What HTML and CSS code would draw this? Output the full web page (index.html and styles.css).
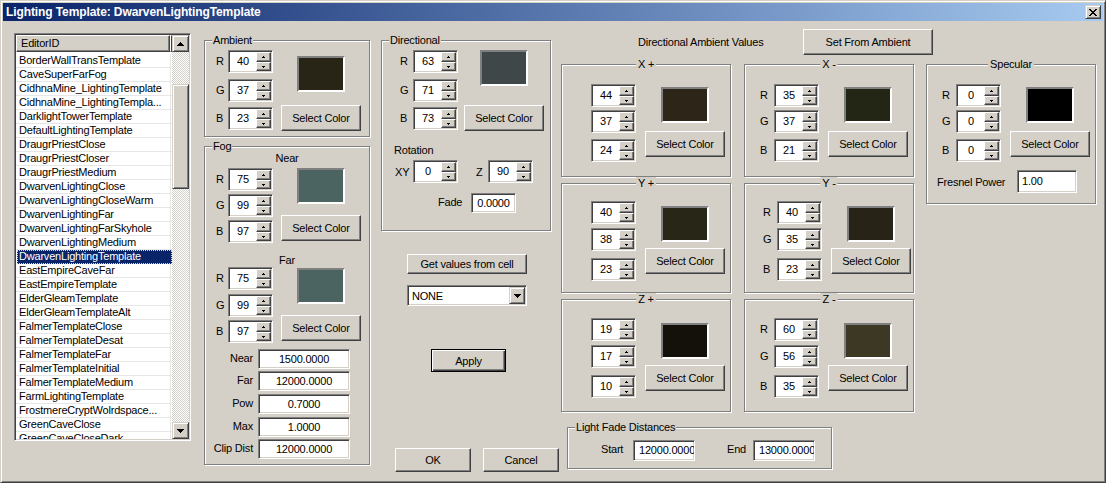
FILE: index.html
```html
<!DOCTYPE html>
<html>
<head>
<meta charset="utf-8">
<title>Lighting Template</title>
<link rel="stylesheet" href="styles.css">
</head>
<body>
<div class="window">
  <div class="titlebar">
    <span class="title">Lighting Template: DwarvenLightingTemplate</span>
    <span class="close raised3d"><svg width="8" height="7" viewBox="0 0 8 7" shape-rendering="crispEdges"><path d="M0 0h2v1H0zM6 0h2v1H6zM1 1h2v1H1zM5 1h2v1H5zM2 2h4v1H2zM3 3h2v1H3zM2 4h4v1H2zM1 5h2v1H1zM5 5h2v1H5zM0 6h2v1H0zM6 6h2v1H6z"/></svg></span>
  </div>
  <div class="client">
    <!-- list -->
    <div class="list sunken">
      <div class="lv">
        <div class="lvhead"><span class="hcell btn">EditorID</span><span class="hfill btn"></span></div>
        <div class="rows">
          <div class="it">BorderWallTransTemplate</div>
          <div class="it">CaveSuperFarFog</div>
          <div class="it">CidhnaMine_LightingTemplate</div>
          <div class="it">CidhnaMine_LightingTempla...</div>
          <div class="it">DarklightTowerTemplate</div>
          <div class="it">DefaultLightingTemplate</div>
          <div class="it">DraugrPriestClose</div>
          <div class="it">DraugrPriestCloser</div>
          <div class="it">DraugrPriestMedium</div>
          <div class="it">DwarvenLightingClose</div>
          <div class="it">DwarvenLightingCloseWarm</div>
          <div class="it">DwarvenLightingFar</div>
          <div class="it">DwarvenLightingFarSkyhole</div>
          <div class="it">DwarvenLightingMedium</div>
          <div class="it sel">DwarvenLightingTemplate</div>
          <div class="it">EastEmpireCaveFar</div>
          <div class="it">EastEmpireTemplate</div>
          <div class="it">ElderGleamTemplate</div>
          <div class="it">ElderGleamTemplateAlt</div>
          <div class="it">FalmerTemplateClose</div>
          <div class="it">FalmerTemplateDesat</div>
          <div class="it">FalmerTemplateFar</div>
          <div class="it">FalmerTemplateInitial</div>
          <div class="it">FalmerTemplateMedium</div>
          <div class="it">FarmLightingTemplate</div>
          <div class="it">FrostmereCryptWolrdspace...</div>
          <div class="it">GreenCaveClose</div>
          <div class="it">GreenCaveCloseDark</div>
        </div>
      </div>
      <div class="vscroll">
        <div class="sbtn raised3d"><svg width="7" height="4" viewBox="0 0 7 4" shape-rendering="crispEdges"><path d="M3 0h1v1H3zM2 1h3v1H2zM1 2h5v1H1zM0 3h7v1H0z"/></svg></div>
        <div class="track"><div class="thumb raised3d"></div></div>
        <div class="sbtn raised3d"><svg width="7" height="4" viewBox="0 0 7 4" shape-rendering="crispEdges"><path d="M0 0h7v1H0zM1 1h5v1H1zM2 2h3v1H2zM3 3h1v1H3z"/></svg></div>
      </div>
    </div>

    <!-- ambient / fog -->
    <div class="col2">
      <div class="group g-amb">
        <span class="legend">Ambient</span>
        <div class="cblock cb-amb">
          <div class="rgb">
            <div class="row"><span class="lbl">R</span><div class="spin sunken"><span class="val">40</span><span class="ud"><i class="up"></i><i class="dn"></i></span></div></div>
            <div class="row"><span class="lbl">G</span><div class="spin sunken"><span class="val">37</span><span class="ud"><i class="up"></i><i class="dn"></i></span></div></div>
            <div class="row"><span class="lbl">B</span><div class="spin sunken"><span class="val">23</span><span class="ud"><i class="up"></i><i class="dn"></i></span></div></div>
          </div>
          <div class="pick"><div class="swatch" style="background:#282517"></div><button class="btn">Select Color</button></div>
        </div>
      </div>
      <div class="group g-fog">
        <span class="legend">Fog</span>
        <div class="fhead">Near</div>
        <div class="cblock cb-near">
          <div class="rgb">
            <div class="row"><span class="lbl">R</span><div class="spin sunken"><span class="val">75</span><span class="ud"><i class="up"></i><i class="dn"></i></span></div></div>
            <div class="row"><span class="lbl">G</span><div class="spin sunken"><span class="val">99</span><span class="ud"><i class="up"></i><i class="dn"></i></span></div></div>
            <div class="row"><span class="lbl">B</span><div class="spin sunken"><span class="val">97</span><span class="ud"><i class="up"></i><i class="dn"></i></span></div></div>
          </div>
          <div class="pick"><div class="swatch" style="background:#4b6361"></div><button class="btn">Select Color</button></div>
        </div>
        <div class="fhead far">Far</div>
        <div class="cblock cb-far">
          <div class="rgb">
            <div class="row"><span class="lbl">R</span><div class="spin sunken"><span class="val">75</span><span class="ud"><i class="up"></i><i class="dn"></i></span></div></div>
            <div class="row"><span class="lbl">G</span><div class="spin sunken"><span class="val">99</span><span class="ud"><i class="up"></i><i class="dn"></i></span></div></div>
            <div class="row"><span class="lbl">B</span><div class="spin sunken"><span class="val">97</span><span class="ud"><i class="up"></i><i class="dn"></i></span></div></div>
          </div>
          <div class="pick"><div class="swatch" style="background:#4b6361"></div><button class="btn">Select Color</button></div>
        </div>
        <div class="dist">
          <div class="drow"><span class="dlbl">Near</span><div class="dedit sunken">1500.0000</div></div>
          <div class="drow"><span class="dlbl">Far</span><div class="dedit sunken">12000.0000</div></div>
          <div class="drow"><span class="dlbl">Pow</span><div class="dedit sunken">0.7000</div></div>
          <div class="drow"><span class="dlbl">Max</span><div class="dedit sunken">1.0000</div></div>
          <div class="drow"><span class="dlbl">Clip Dist</span><div class="dedit sunken">12000.0000</div></div>
        </div>
      </div>
    </div>

    <!-- directional -->
    <div class="col3">
      <div class="group g-dir">
        <span class="legend">Directional</span>
        <div class="cblock cb-dir">
          <div class="rgb">
            <div class="row"><span class="lbl">R</span><div class="spin sunken"><span class="val">63</span><span class="ud"><i class="up"></i><i class="dn"></i></span></div></div>
            <div class="row"><span class="lbl">G</span><div class="spin sunken"><span class="val">71</span><span class="ud"><i class="up"></i><i class="dn"></i></span></div></div>
            <div class="row"><span class="lbl">B</span><div class="spin sunken"><span class="val">73</span><span class="ud"><i class="up"></i><i class="dn"></i></span></div></div>
          </div>
          <div class="pick"><div class="swatch" style="background:#3f4749"></div><button class="btn">Select Color</button></div>
        </div>
        <div class="rottitle">Rotation</div>
        <div class="rotrow">
          <span class="xylbl">XY</span>
          <div class="spin sunken"><span class="val">0</span><span class="ud"><i class="up"></i><i class="dn"></i></span></div>
          <span class="zlbl">Z</span>
          <div class="spin sunken"><span class="val">90</span><span class="ud"><i class="up"></i><i class="dn"></i></span></div>
        </div>
        <div class="faderow"><span class="fadelbl">Fade</span><div class="fadeedit sunken">0.0000</div></div>
      </div>
      <button class="btn getvals">Get values from cell</button>
      <div class="combo sunken"><span class="ctext">NONE</span><span class="ddbtn raised3d"><svg width="7" height="4" viewBox="0 0 7 4" shape-rendering="crispEdges"><path d="M0 0h7v1H0zM1 1h5v1H1zM2 2h3v1H2zM3 3h1v1H3z"/></svg></span></div>
      <button class="btn default apply">Apply</button>
      <div class="okrow"><button class="btn">OK</button><button class="btn">Cancel</button></div>
    </div>

    <!-- directional ambient -->
    <div class="col4">
      <div class="davhead"><span class="davtitle">Directional Ambient Values</span><button class="btn setamb">Set From Ambient</button></div>
      <div class="davbody">
        <div class="davgrid">
          <div class="group">
            <span class="legend mid">X +</span>
            <div class="cblock cb-x">
              <div class="rgb">
                <div class="row"><span class="lbl"></span><div class="spin sunken"><span class="val">44</span><span class="ud"><i class="up"></i><i class="dn"></i></span></div></div>
                <div class="row"><span class="lbl"></span><div class="spin sunken"><span class="val">37</span><span class="ud"><i class="up"></i><i class="dn"></i></span></div></div>
                <div class="row"><span class="lbl"></span><div class="spin sunken"><span class="val">24</span><span class="ud"><i class="up"></i><i class="dn"></i></span></div></div>
              </div>
              <div class="pick"><div class="swatch" style="background:#2c2518"></div><button class="btn">Select Color</button></div>
            </div>
          </div>
          <div class="group">
            <span class="legend mid">X -</span>
            <div class="cblock cb-x">
              <div class="rgb">
                <div class="row"><span class="lbl">R</span><div class="spin sunken"><span class="val">35</span><span class="ud"><i class="up"></i><i class="dn"></i></span></div></div>
                <div class="row"><span class="lbl">G</span><div class="spin sunken"><span class="val">37</span><span class="ud"><i class="up"></i><i class="dn"></i></span></div></div>
                <div class="row"><span class="lbl">B</span><div class="spin sunken"><span class="val">21</span><span class="ud"><i class="up"></i><i class="dn"></i></span></div></div>
              </div>
              <div class="pick"><div class="swatch" style="background:#232515"></div><button class="btn">Select Color</button></div>
            </div>
          </div>
          <div class="group">
            <span class="legend mid">Y +</span>
            <div class="cblock cb-y">
              <div class="rgb">
                <div class="row"><span class="lbl"></span><div class="spin sunken"><span class="val">40</span><span class="ud"><i class="up"></i><i class="dn"></i></span></div></div>
                <div class="row"><span class="lbl"></span><div class="spin sunken"><span class="val">38</span><span class="ud"><i class="up"></i><i class="dn"></i></span></div></div>
                <div class="row"><span class="lbl"></span><div class="spin sunken"><span class="val">23</span><span class="ud"><i class="up"></i><i class="dn"></i></span></div></div>
              </div>
              <div class="pick"><div class="swatch" style="background:#282617"></div><button class="btn">Select Color</button></div>
            </div>
          </div>
          <div class="group">
            <span class="legend mid">Y -</span>
            <div class="cblock cb-y shift">
              <div class="rgb">
                <div class="row"><span class="lbl">R</span><div class="spin sunken"><span class="val">40</span><span class="ud"><i class="up"></i><i class="dn"></i></span></div></div>
                <div class="row"><span class="lbl">G</span><div class="spin sunken"><span class="val">35</span><span class="ud"><i class="up"></i><i class="dn"></i></span></div></div>
                <div class="row"><span class="lbl">B</span><div class="spin sunken"><span class="val">23</span><span class="ud"><i class="up"></i><i class="dn"></i></span></div></div>
              </div>
              <div class="pick"><div class="swatch" style="background:#282317"></div><button class="btn">Select Color</button></div>
            </div>
          </div>
          <div class="group">
            <span class="legend mid">Z +</span>
            <div class="cblock cb-z">
              <div class="rgb">
                <div class="row"><span class="lbl"></span><div class="spin sunken"><span class="val">19</span><span class="ud"><i class="up"></i><i class="dn"></i></span></div></div>
                <div class="row"><span class="lbl"></span><div class="spin sunken"><span class="val">17</span><span class="ud"><i class="up"></i><i class="dn"></i></span></div></div>
                <div class="row"><span class="lbl"></span><div class="spin sunken"><span class="val">10</span><span class="ud"><i class="up"></i><i class="dn"></i></span></div></div>
              </div>
              <div class="pick"><div class="swatch" style="background:#13110a"></div><button class="btn">Select Color</button></div>
            </div>
          </div>
          <div class="group">
            <span class="legend mid">Z -</span>
            <div class="cblock cb-z">
              <div class="rgb">
                <div class="row"><span class="lbl">R</span><div class="spin sunken"><span class="val">60</span><span class="ud"><i class="up"></i><i class="dn"></i></span></div></div>
                <div class="row"><span class="lbl">G</span><div class="spin sunken"><span class="val">56</span><span class="ud"><i class="up"></i><i class="dn"></i></span></div></div>
                <div class="row"><span class="lbl">B</span><div class="spin sunken"><span class="val">35</span><span class="ud"><i class="up"></i><i class="dn"></i></span></div></div>
              </div>
              <div class="pick"><div class="swatch" style="background:#3c3823"></div><button class="btn">Select Color</button></div>
            </div>
          </div>
        </div>
        <div class="group g-spec">
          <span class="legend mid">Specular</span>
          <div class="cblock cb-x">
            <div class="rgb">
              <div class="row"><span class="lbl">R</span><div class="spin sunken"><span class="val">0</span><span class="ud"><i class="up"></i><i class="dn"></i></span></div></div>
              <div class="row"><span class="lbl">G</span><div class="spin sunken"><span class="val">0</span><span class="ud"><i class="up"></i><i class="dn"></i></span></div></div>
              <div class="row"><span class="lbl">B</span><div class="spin sunken"><span class="val">0</span><span class="ud"><i class="up"></i><i class="dn"></i></span></div></div>
            </div>
            <div class="pick"><div class="swatch" style="background:#000000"></div><button class="btn">Select Color</button></div>
          </div>
          <div class="fresnel"><span class="frlbl">Fresnel Power</span><div class="fredit sunken">1.00</div></div>
        </div>
      </div>
      <div class="group g-fade">
        <span class="legend">Light Fade Distances</span>
        <div class="fadedist">
          <span class="fdlbl">Start</span><div class="fdedit sunken">12000.0000</div>
          <span class="fdlbl end">End</span><div class="fdedit sunken">13000.0000</div>
        </div>
      </div>
    </div>
  </div>
</div>
</body>
</html>
```

FILE: styles.css
```css
* { box-sizing: border-box; }
html, body { margin: 0; padding: 0; }
body {
  width: 1106px;
  height: 483px;
  overflow: hidden;
  background: #d4d0c8;
  font-family: "Liberation Sans", Arial, sans-serif;
  font-size: 11px;
  letter-spacing: -0.2px;
  color: #000;
}
button {
  font: inherit;
  letter-spacing: inherit;
  color: #000;
  margin: 0;
  padding: 0;
  background: #d4d0c8;
  cursor: default;
}

/* window frame */
.window {
  width: 1106px;
  height: 483px;
  padding: 2px;
  border: 1px solid;
  border-color: #d4d0c8 #404040 #404040 #d4d0c8;
  box-shadow: inset 1px 1px #fff, inset -1px -1px #808080;
  display: flex;
  flex-direction: column;
}
.titlebar {
  height: 18px;
  flex: none;
  margin-bottom: 1px;
  display: flex;
  align-items: center;
  justify-content: space-between;
  padding: 0 2px 0 3px;
  background: linear-gradient(90deg, #0a246a, #a6caf0);
}
.title {
  color: #fff;
  font-weight: bold;
  font-size: 12px;
  letter-spacing: -0.1px;
  white-space: nowrap;
}
.close {
  width: 16px;
  height: 14px;
  display: flex;
  align-items: center;
  justify-content: center;
}

/* bevels */
.raised3d {
  background: #d4d0c8;
  border: 1px solid;
  border-color: #d4d0c8 #404040 #404040 #d4d0c8;
  box-shadow: inset 1px 1px #fff, inset -1px -1px #808080;
}
.btn {
  background: #d4d0c8;
  border: 1px solid;
  border-color: #fff #404040 #404040 #fff;
  box-shadow: inset -1px -1px #808080;
}
.btn.default {
  border-color: #000;
  box-shadow: inset 1px 1px #fff, inset -1px -1px #404040, inset -2px -2px #808080;
}
.sunken {
  background: #fff;
  border: 1px solid;
  border-color: #808080 #fff #fff #808080;
  box-shadow: inset 1px 1px #404040, inset -1px -1px #d4d0c8;
  padding: 1px;
}

.client {
  flex: 1;
  display: flex;
  align-items: flex-start;
}

/* list view */
.list {
  width: 177px;
  height: 408px;
  margin: 11px 0 0 11px;
  display: flex;
  flex: none;
}
.lv {
  width: 156px;
  height: 100%;
  overflow: hidden;
  display: flex;
  flex-direction: column;
}
.lvhead { height: 17px; display: flex; flex: none; }
.hcell { width: 154px; padding-left: 4px; line-height: 15px; }
.hfill { flex: 1; }
.rows { padding-top: 2px; }
.it {
  height: 14px;
  line-height: 13px;
  padding-left: 3px;
  white-space: nowrap;
  overflow: hidden;
  border-bottom: 1px solid #e6e6e6;
  background: #fff linear-gradient(90deg, transparent 154px, #e6e6e6 154px 155px, transparent 155px);
}
.it.sel {
  width: 155px;
  margin-left: 1px;
  padding-left: 2px;
  background: #0a246a;
  color: #fff;
  border-bottom-color: #0a246a;
  outline: 1px dotted #e6d98f;
  outline-offset: -1px;
}
.vscroll { width: 17px; display: flex; flex-direction: column; }
.sbtn {
  height: 17px;
  flex: none;
  display: flex;
  align-items: center;
  justify-content: center;
}
.track {
  flex: 1;
  background: repeating-conic-gradient(#fff 0 25%, #d4d0c8 0 50%) 0 0 / 2px 2px;
}
.thumb { margin-top: 32px; height: 105px; }

/* group boxes */
.group {
  position: relative;
  flex: none;
  border: 1px solid #808080;
  box-shadow: inset 1px 1px #fff, 1px 1px #fff;
}
.legend {
  position: absolute;
  top: -7px;
  left: 7px;
  padding: 0 1px;
  line-height: 13px;
  background: #d4d0c8;
  white-space: nowrap;
}
.legend.mid {
  left: 50%;
  transform: translateX(-50%);
  padding: 0 2px;
}

/* color block: rgb spinners + swatch/button */
.cblock {
  display: flex;
  align-items: flex-start;
  padding-left: var(--pl);
}
.rgb { display: flex; flex-direction: column; margin-top: var(--rt); }
.row { display: flex; align-items: center; }
.row + .row { margin-top: var(--g1); }
.row + .row + .row { margin-top: var(--g2); }
.lbl { width: var(--lw); line-height: 13px; flex: none; }
.pick {
  display: flex;
  flex-direction: column;
  align-items: center;
  width: 80px;
  flex: none;
  margin-left: var(--pg);
}
.pick .swatch { margin-top: var(--st); }
.pick .btn { margin-top: var(--bt); width: 80px; height: 26px; }
.swatch {
  width: 48px;
  height: 36px;
  border: 2px solid;
  border-color: #808080 #fff #fff #808080;
}

.cb-amb  { --pl: 11px; --lw: 12px; --pg: 8px; --rt: 9px; --g1: 6px; --g2: 5px; --st: 15px; --bt: 13px; }
.cb-near { --pl: 11px; --lw: 12px; --pg: 8px; --rt: 3px; --g1: 3px; --g2: 3px; --st: 3px; --bt: 11px; }
.cb-far  { --pl: 11px; --lw: 12px; --pg: 8px; --rt: 0px; --g1: 4px; --g2: 3px; --st: 1px; --bt: 11px; }
.cb-dir  { --pl: 18px; --lw: 13px; --pg: 6px; --rt: 9px; --g1: 6px; --g2: 5px; --st: 9px; --bt: 19px; }
.cb-x    { --pl: 15px; --lw: 14px; --pg: 9px; --rt: 19px; --g1: 3px; --g2: 6px; --st: 22px; --bt: 8px; }
.cb-y    { --pl: 15px; --lw: 14px; --pg: 9px; --rt: 17px; --g1: 4px; --g2: 7px; --st: 22px; --bt: 6px; }
.cb-y.shift { --pl: 18px; }
.cb-z    { --pl: 15px; --lw: 14px; --pg: 9px; --rt: 18px; --g1: 4px; --g2: 7px; --st: 23px; --bt: 6px; }

/* spinner */
.spin { width: 45px; height: 23px; display: flex; flex: none; }
.val { flex: 1; text-align: center; line-height: 19px; }
.ud { width: 15px; display: flex; flex-direction: column; }
.ud i {
  display: flex;
  align-items: center;
  justify-content: center;
  background: #d4d0c8;
  border: 1px solid;
  border-color: #fff #404040 #404040 #fff;
  box-shadow: inset -1px -1px #808080;
}
.ud .up { height: 10px; }
.ud .dn { height: 9px; }
.up::before, .dn::before {
  content: "";
  width: 1px;
  height: 1px;
  margin-top: -1px;
  background: #000;
}
.up::before { box-shadow: -1px 1px #000, 0 1px #000, 1px 1px #000; }
.dn::before { box-shadow: -1px 0 #000, 1px 0 #000, 0 1px #000; }

/* column 2 */
.col2 { margin: 18px 0 0 13px; display: flex; flex-direction: column; flex: none; }
.g-amb { width: 166px; height: 97px; }
.g-fog { width: 166px; height: 319px; margin-top: 9px; }
.fhead { margin: 5px 0 0 62px; width: 40px; text-align: center; line-height: 13px; }
.fhead.far { margin-top: 11px; }
.dist { margin-top: 6px; display: flex; flex-direction: column; }
.drow { display: flex; align-items: center; }
.drow + .drow { margin-top: 3px; }
.drow:nth-child(2), .drow:nth-child(5) { margin-top: 2px; }
.dlbl { width: 48px; text-align: right; line-height: 13px; margin-top: -2px; }
.dedit {
  width: 92px;
  height: 20px;
  margin-left: 5px;
  text-align: center;
  line-height: 16px;
  white-space: nowrap;
}

/* column 3 */
.col3 {
  margin: 18px 0 0 11px;
  width: 177px;
  flex: none;
  display: flex;
  flex-direction: column;
  align-items: flex-start;
}
.g-dir { width: 170px; height: 191px; }
.rottitle { margin: 13px 0 0 12px; line-height: 13px; }
.rotrow { display: flex; align-items: center; margin: 3px 0 0 13px; }
.xylbl { width: 18px; }
.zlbl { width: 12px; margin-left: 18px; }
.faderow { display: flex; align-items: center; margin: 10px 0 0 56px; }
.fadelbl { width: 33px; margin-top: -3px; }
.fadeedit { width: 45px; height: 20px; text-align: center; line-height: 16px; }
.getvals { margin: 23px 0 0 26px; width: 120px; height: 20px; }
.combo {
  margin: 11px 0 0 26px;
  width: 120px;
  height: 21px;
  display: flex;
  align-items: center;
}
.ctext { flex: 1; padding-left: 3px; }
.ddbtn {
  width: 16px;
  height: 17px;
  display: flex;
  align-items: center;
  justify-content: center;
}
.apply { margin: 43px 0 0 50px; width: 75px; height: 23px; }
.okrow { display: flex; gap: 12px; margin: 76px 0 0 14px; }
.okrow .btn { width: 76px; height: 24px; }

/* column 4 */
.col4 {
  margin: 7px 0 0 3px;
  flex: none;
  display: flex;
  flex-direction: column;
  align-items: flex-start;
}
.davhead { display: flex; align-items: center; height: 26px; }
.davtitle { width: 165px; margin-left: 77px; line-height: 13px; }
.setamb { width: 130px; height: 26px; }
.davbody { display: flex; align-items: flex-start; margin-top: 9px; }
.davgrid {
  display: grid;
  grid-template-columns: 170px 170px;
  grid-template-rows: 113px 110px 113px;
  column-gap: 13px;
  row-gap: 6px;
}
.g-spec { width: 170px; height: 140px; margin-left: 12px; }
.fresnel { display: flex; align-items: center; margin: 8px 0 0 10px; }
.frlbl { width: 80px; }
.fredit { width: 60px; height: 23px; padding-left: 4px; line-height: 19px; }
.g-fade { width: 265px; height: 42px; margin: 15px 0 0 6px; }
.fadedist { display: flex; align-items: center; margin: 12px 0 0 33px; }
.fdlbl { width: 32px; margin-top: -3px; }
.fdlbl.end { width: 26px; margin-left: 32px; }
.fdedit {
  width: 62px;
  height: 21px;
  padding-left: 5px;
  line-height: 17px;
  white-space: nowrap;
  overflow: hidden;
}
```
